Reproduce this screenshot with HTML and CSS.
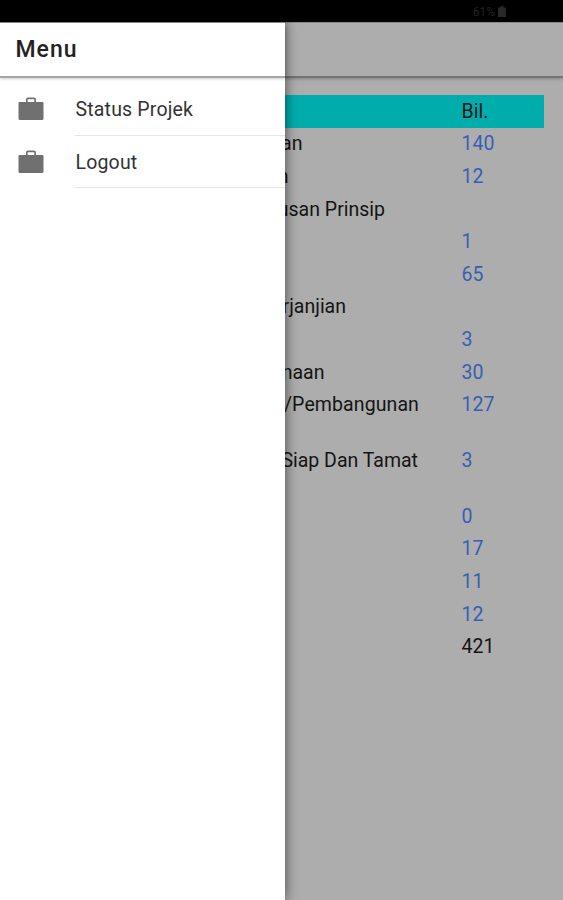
FILE: index.html
```
<!DOCTYPE html>
<html lang="ms">
<head>
    <meta charset="UTF-8">
    <meta name="viewport" content="width=device-width, initial-scale=1.0">
    <title>Status Projek</title>
    <link rel="stylesheet" href="styles.css">
</head>
<body>
    <!-- Status bar -->
    <div class="status-bar">
        <span>61%</span>
        <svg class="battery" viewBox="0 0 8 11"><path d="M2.5 0h3v1.5H8V11H0V1.5h2.5z"/></svg>
    </div>

    <div class="app">
        <!-- Side menu -->
        <nav class="menu">
            <h1 class="menu-title">Menu</h1>
            <ul class="menu-list">
                <li class="menu-item">
                    <svg class="icon" viewBox="0 0 26 24"><path d="M8 5V2.500Q8 .5 10 .5h6q2 0 2 2V5h6.500q1 0 1 1v15.500q0 1.500-1.500 1.500H2Q.5 23 .5 21.500V6q0-1 1-1zM9.700 5h6.600V2.200H9.700z"/></svg>
                    <a class="menu-link">Status Projek</a>
                </li>
                <li class="menu-item">
                    <svg class="icon" viewBox="0 0 26 24"><path d="M8 5V2.500Q8 .5 10 .5h6q2 0 2 2V5h6.500q1 0 1 1v15.500q0 1.500-1.500 1.500H2Q.5 23 .5 21.500V6q0-1 1-1zM9.700 5h6.600V2.200H9.700z"/></svg>
                    <a class="menu-link">Logout</a>
                </li>
            </ul>
        </nav>

        <!-- Page behind the menu -->
        <main class="page">
            <div class="toolbar"></div>
            <div class="table">
                <div class="row head"><span class="label"></span><span>Bil.</span></div>
                <div class="row"><span class="label end-an">an</span><a>140</a></div>
                <div class="row"><span class="label end-n">n</span><a>12</a></div>
                <div class="row"><span class="label end-prinsip">usan Prinsip</span></div>
                <div class="row"><span class="label"></span><a>1</a></div>
                <div class="row"><span class="label"></span><a>65</a></div>
                <div class="row"><span class="label end-janjian">rjanjian</span></div>
                <div class="row"><span class="label"></span><a>3</a></div>
                <div class="row"><span class="label end-naan">naan</span><a>30</a></div>
                <div class="row"><span class="label end-bangunan">/Pembangunan</span><a>127</a></div>
                <div class="row tall"><span class="label end-tamat">Siap Dan Tamat</span><a>3</a></div>
                <div class="row"><span class="label"></span><a>0</a></div>
                <div class="row"><span class="label"></span><a>17</a></div>
                <div class="row"><span class="label"></span><a>11</a></div>
                <div class="row"><span class="label"></span><a>12</a></div>
                <div class="row"><span class="label"></span><span>421</span></div>
            </div>
        </main>
    </div>
</body>
</html>
```
FILE: styles.css
```
* {
    margin: 0;
    padding: 0;
    box-sizing: border-box;
}

body {
    height: 900px;
    display: flex;
    flex-direction: column;
    overflow: hidden;
    background: #adadad;
    color: #141414;
    font-family: Roboto, sans-serif;
    font-size: 19.5px;
}

/* Status bar */
.status-bar {
    height: 22px;
    flex: none;
    padding: 1px 57px 0 0;
    display: flex;
    justify-content: flex-end;
    align-items: center;
    gap: 3px;
    background: #000;
    color: #222;
    font-size: 12px;
}

.battery {
    width: 8px;
    height: 11px;
    fill: #292929;
}

.app {
    flex: 1;
    display: flex;
}

/* Side menu */
.menu {
    width: 285px;
    flex: none;
    z-index: 1;
    background: #fff;
    border-top: 1px solid #888;
    box-shadow: 0 0 12px rgba(0, 0, 0, 0.6);
    clip-path: inset(0 -20px 0 0);
}

.menu-title {
    height: 55px;
    padding-left: 15.5px;
    border-bottom: 2px solid #a6a6a6;
    box-shadow: 0 1px 3px rgba(0, 0, 0, 0.2);
    color: #222;
    font-size: 23px;
    font-weight: 500;
    line-height: 53px;
    letter-spacing: 1px;
}

.menu-list {
    padding-top: 5px;
    list-style: none;
}

.menu-item {
    height: 52.5px;
    padding-left: 17.5px;
    display: flex;
    align-items: center;
}

.icon {
    width: 26px;
    height: 24px;
    margin-right: 31.5px;
    fill: #707070;
}

.menu-link {
    flex: 1;
    height: 100%;
    padding-left: 0.5px;
    border-bottom: 1px solid #e6e6e6;
    color: #333;
    line-height: 53px;
    letter-spacing: 0.18px;
}

/* Page */
.page {
    flex: 1;
    min-width: 0;
    overflow: hidden;
}

.toolbar {
    height: 56px;
    border-top: 1px solid #888;
    border-bottom: 2px solid #747474;
    box-shadow: 0 1px 3px rgba(0, 0, 0, 0.25);
}

.table {
    margin: 17px 19px 0 0;
}

.row {
    height: 32.6px;
    display: flex;
    align-items: center;
    white-space: nowrap;
}

.row.tall {
    height: 79px;
}

.head {
    background: #00adad;
}

.row a {
    color: #365fb4;
}

.label {
    width: 176.5px;
    flex: none;
    display: flex;
    justify-content: flex-end;
}

/* Right edge of each label */
.end-an { padding-right: 159px; }
.end-n { padding-right: 173px; }
.end-prinsip { padding-right: 76.5px; }
.end-janjian { padding-right: 115.5px; }
.end-naan { padding-right: 137px; }
.end-bangunan {
    padding-right: 42.5px;
    letter-spacing: 0.1px;
}
.end-tamat { padding-right: 43.5px; }
```
